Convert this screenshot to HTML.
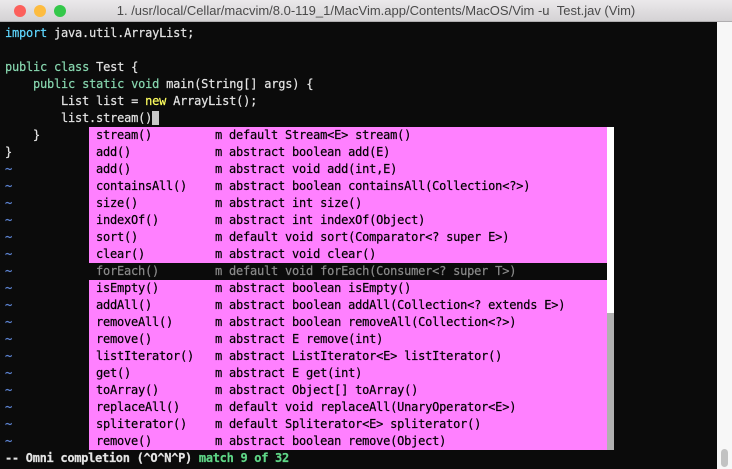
<!DOCTYPE html>
<html><head><style>
body{margin:0;width:732px;height:469px;overflow:hidden;background:#0b0b0b;font-family:"DejaVu Sans Mono","Liberation Mono",monospace;}
#tb{position:absolute;left:0;top:0;width:732px;height:22px;background:linear-gradient(#ebe9eb,#d4d2d4);border-bottom:1px solid #b0aeb0;box-sizing:border-box;}
.dot{position:absolute;top:5px;width:12px;height:12px;border-radius:50%;}
#title{position:absolute;left:0;right:0;top:3px;text-align:center;font:13px "Liberation Sans",sans-serif;color:#4a4a4a;padding-left:20px;}
#ed{position:absolute;left:5px;top:25px;font-size:12px;letter-spacing:-0.22px;color:#e4e4e4;-webkit-text-stroke:0.2px;}
.l{height:17px;line-height:17px;white-space:pre;}
.k{color:#5fd7ff}.g{color:#87d7af}.y{color:#ffff5f}.t{color:#5f87d7}.m{color:#5fd787}
#pop{position:absolute;left:89px;top:127px;width:518px;font-size:12px;letter-spacing:-0.22px;color:#000;-webkit-text-stroke:0.2px;}
#pop .l{background:#ff80ff;padding-left:7px;}
#pop .l b{font-weight:normal;display:inline-block;width:119px;}
#pop .s{background:#0b0b0b;color:#8a8a8a;}
#sb{position:absolute;left:607px;top:127px;width:7px;height:323px;background:#b0b0b0;}
#sbt{position:absolute;left:607px;top:127px;width:7px;height:186px;background:#fff;}
#ws{position:absolute;left:717px;top:22px;width:15px;height:447px;background:#f7f7f7;}
#wst{position:absolute;left:721px;top:449px;width:7px;height:18px;border-radius:4px;background:#c2c2c2;}
</style></head><body>
<div id="tb">
<div class="dot" style="left:14px;background:#fc605c"></div>
<div class="dot" style="left:34px;background:#fdbc40"></div>
<div class="dot" style="left:54px;background:#34c84a"></div>
<div id="title">1. /usr/local/Cellar/macvim/8.0-119_1/MacVim.app/Contents/MacOS/Vim -u &nbsp;Test.jav (Vim)</div>
</div>
<div id="ed"><div class="l"><span class="k">import</span> java.util.ArrayList;</div><div class="l"> </div><div class="l"><span class="g">public</span> <span class="g">class</span> Test {</div><div class="l">    <span class="g">public</span> <span class="g">static</span> <span class="g">void</span> main(String[] args) {</div><div class="l">        List list = <span class="y">new</span> ArrayList();</div><div class="l">        list.stream()<span style="background:#c8c8c8"> </span></div><div class="l">    }</div><div class="l">}</div><div class="l t">~</div><div class="l t">~</div><div class="l t">~</div><div class="l t">~</div><div class="l t">~</div><div class="l t">~</div><div class="l t">~</div><div class="l t">~</div><div class="l t">~</div><div class="l t">~</div><div class="l t">~</div><div class="l t">~</div><div class="l t">~</div><div class="l t">~</div><div class="l t">~</div><div class="l t">~</div><div class="l t">~</div><div class="l" style="font-weight:bold;letter-spacing:-0.3px">-- Omni completion (^O^N^P) <span class="m">match 9 of 32</span></div></div>
<div id="pop"><div class="l"><b>stream()</b>m default Stream&lt;E&gt; stream()</div><div class="l"><b>add()</b>m abstract boolean add(E)</div><div class="l"><b>add()</b>m abstract void add(int,E)</div><div class="l"><b>containsAll()</b>m abstract boolean containsAll(Collection&lt;?&gt;)</div><div class="l"><b>size()</b>m abstract int size()</div><div class="l"><b>indexOf()</b>m abstract int indexOf(Object)</div><div class="l"><b>sort()</b>m default void sort(Comparator&lt;? super E&gt;)</div><div class="l"><b>clear()</b>m abstract void clear()</div><div class="l s"><b>forEach()</b>m default void forEach(Consumer&lt;? super T&gt;)</div><div class="l"><b>isEmpty()</b>m abstract boolean isEmpty()</div><div class="l"><b>addAll()</b>m abstract boolean addAll(Collection&lt;? extends E&gt;)</div><div class="l"><b>removeAll()</b>m abstract boolean removeAll(Collection&lt;?&gt;)</div><div class="l"><b>remove()</b>m abstract E remove(int)</div><div class="l"><b>listIterator()</b>m abstract ListIterator&lt;E&gt; listIterator()</div><div class="l"><b>get()</b>m abstract E get(int)</div><div class="l"><b>toArray()</b>m abstract Object[] toArray()</div><div class="l"><b>replaceAll()</b>m default void replaceAll(UnaryOperator&lt;E&gt;)</div><div class="l"><b>spliterator()</b>m default Spliterator&lt;E&gt; spliterator()</div><div class="l"><b>remove()</b>m abstract boolean remove(Object)</div></div>
<div id="sb"></div><div id="sbt"></div>
<div id="ws"></div><div id="wst"></div>
</body></html>
